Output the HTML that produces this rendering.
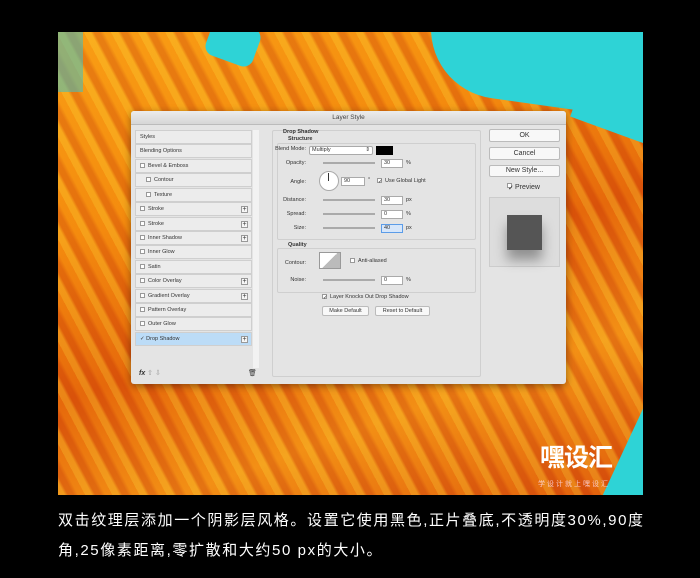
<!DOCTYPE html>
<html><head><meta charset="utf-8"><style>
*{margin:0;padding:0;box-sizing:border-box}
body{width:700px;height:578px;background:#000;position:relative;overflow:hidden;font-family:"Liberation Sans",sans-serif}
.paint{position:absolute;left:58px;top:32px;width:585px;height:463px;overflow:hidden;
background:
repeating-linear-gradient(62deg,rgba(255,200,40,.35) 0 6px,rgba(200,50,0,.3) 9px 14px,rgba(255,140,0,.2) 18px 24px),
linear-gradient(160deg,#f7a21a 0%,#f28c12 30%,#e0600e 55%,#f0901a 75%,#d9520e 100%);}
.teal1{position:absolute;left:370px;top:-30px;width:260px;height:105px;background:#2ed3d6;transform:rotate(8deg);border-radius:20px 0 0 70px}
.teal1b{position:absolute;left:520px;top:40px;width:80px;height:60px;background:#2ed3d6;transform:rotate(20deg)}
.teal2{position:absolute;left:0;top:0;width:25px;height:60px;background:#4cbcb6;opacity:.6}
.teal3{position:absolute;left:555px;top:380px;width:80px;height:140px;background:#2ed3d6;transform:rotate(25deg)}
.teal4{position:absolute;left:150px;top:-10px;width:50px;height:40px;background:#2ed3d6;transform:rotate(20deg);border-radius:10px}
.logo{position:absolute;left:540px;top:438px;color:#fff;font:bold 25px "Noto Sans CJK SC",sans-serif;letter-spacing:-1px}
.slogan{position:absolute;left:538px;top:479px;color:#fde;font:7px "Noto Sans CJK SC",sans-serif;letter-spacing:2px;opacity:.8}
.dlg{position:absolute;left:131px;top:111px;width:435px;height:273px;background:#e4e4e4;border-radius:3px;font-size:5.5px;color:#333;box-shadow:0 2px 8px rgba(0,0,0,.4)}
.title{height:14px;background:linear-gradient(#ececec,#d6d6d6);text-align:center;font-size:6.5px;line-height:14px;color:#444;border-bottom:1px solid #bbb;border-radius:3px 3px 0 0}
.a{position:absolute}
.row{position:absolute;left:4px;width:117px;height:14px;background:#ececec;border:1px solid #cfcfcf;line-height:13px;padding-left:4px}
.cb{display:inline-block;width:5px;height:5px;border:1px solid #999;background:#fff;margin-right:3px;vertical-align:-1px}
.plus{position:absolute;right:3px;top:3px;width:7px;height:7px;border:1px solid #999;background:#f6f6f6;font-size:7px;line-height:5px;text-align:center}
.box{position:absolute;border:1px solid #cfcfcf;border-radius:2px}
.fld{position:absolute;height:9px;background:#fff;border:1px solid #aaa;padding-left:2px;line-height:7px}
.sl{position:absolute;height:2px;background:#aaa;width:52px}
.lbl{position:absolute;text-align:right;width:40px}
.btn{position:absolute;background:#f8f8f8;border:1px solid #bbb;border-radius:2px;text-align:center}
.cap{position:absolute;left:58px;color:#fff;font:15px "Liberation Sans","Noto Sans CJK SC",sans-serif;white-space:nowrap;letter-spacing:1.6px}
</style></head><body>
<div class="paint"><div class="teal1"></div><div class="teal1b"></div><div class="teal2"></div><div class="teal3"></div><div class="teal4"></div></div>
<div class="logo">嘿设汇</div>
<div class="slogan">学设计就上嘿设汇</div>

<div class="dlg">
<div class="title">Layer Style</div>
<div class="row" style="top:19px">Styles</div>
<div class="row" style="top:33px">Blending Options</div>
<div class="row" style="top:48px"><span class="cb"></span>Bevel &amp; Emboss</div>
<div class="row" style="top:62px;padding-left:10px"><span class="cb"></span>Contour</div>
<div class="row" style="top:77px;padding-left:10px"><span class="cb"></span>Texture</div>
<div class="row" style="top:91px"><span class="cb"></span>Stroke<span class="plus">+</span></div>
<div class="row" style="top:106px"><span class="cb"></span>Stroke<span class="plus">+</span></div>
<div class="row" style="top:120px"><span class="cb"></span>Inner Shadow<span class="plus">+</span></div>
<div class="row" style="top:134px"><span class="cb"></span>Inner Glow</div>
<div class="row" style="top:149px"><span class="cb"></span>Satin</div>
<div class="row" style="top:163px"><span class="cb"></span>Color Overlay<span class="plus">+</span></div>
<div class="row" style="top:178px"><span class="cb"></span>Gradient Overlay<span class="plus">+</span></div>
<div class="row" style="top:192px"><span class="cb"></span>Pattern Overlay</div>
<div class="row" style="top:206px"><span class="cb"></span>Outer Glow</div>
<div class="row" style="top:221px;background:#bcdcf7">✓ Drop Shadow<span class="plus">+</span></div>
<div class="a" style="left:122px;top:19px;width:6px;height:238px;background:#f2f2f2"></div>
<div class="a" style="left:8px;top:258px;font-size:7px;font-style:italic;font-weight:bold">fx <span style="font-style:normal;color:#999;font-weight:normal">⇧ ⇩</span></div>
<div class="a" style="left:117px;top:258px;font-size:7px">🗑</div>

<div class="box" style="left:141px;top:19px;width:209px;height:247px"></div>
<div class="a" style="left:152px;top:18px;font-weight:bold">Drop Shadow</div>
<div class="a" style="left:157px;top:25px;font-weight:bold">Structure</div>
<div class="box" style="left:146px;top:32px;width:199px;height:97px"></div>
<div class="lbl" style="left:120px;top:35px;width:55px">Blend Mode:</div>
<div class="fld" style="left:178px;top:35px;width:64px;border-radius:2px">Multiply<span style="float:right;margin-right:2px">⇕</span></div>
<div class="a" style="left:245px;top:35px;width:17px;height:9px;background:#000"></div>
<div class="lbl" style="left:120px;top:49px;width:55px">Opacity:</div><div class="sl" style="left:192px;top:51px"></div><div class="fld" style="left:250px;top:48px;width:22px">30</div><div class="a" style="left:275px;top:49px">%</div>
<div class="lbl" style="left:120px;top:68px;width:55px">Angle:</div>
<div class="a" style="left:188px;top:60px;width:20px;height:20px;border-radius:50%;background:#fff;border:1px solid #aaa"></div><div class="a" style="left:197px;top:62px;width:1px;height:8px;background:#333"></div>
<div class="fld" style="left:210px;top:66px;width:24px">90</div><div class="a" style="left:237px;top:66px">°</div>
<div class="a" style="left:246px;top:67px"><span class="cb">✓</span>Use Global Light</div>
<div class="lbl" style="left:120px;top:86px;width:55px">Distance:</div><div class="sl" style="left:192px;top:88px"></div><div class="fld" style="left:250px;top:85px;width:22px">30</div><div class="a" style="left:275px;top:86px">px</div>
<div class="lbl" style="left:120px;top:100px;width:55px">Spread:</div><div class="sl" style="left:192px;top:102px"></div><div class="fld" style="left:250px;top:99px;width:22px">0</div><div class="a" style="left:275px;top:100px">%</div>
<div class="lbl" style="left:120px;top:114px;width:55px">Size:</div><div class="sl" style="left:192px;top:116px"></div><div class="fld" style="left:250px;top:113px;width:22px;border-color:#5b9ce8;background:#d6e6fa">40</div><div class="a" style="left:275px;top:114px">px</div>
<div class="a" style="left:157px;top:131px;font-weight:bold">Quality</div>
<div class="box" style="left:146px;top:137px;width:199px;height:45px"></div>
<div class="lbl" style="left:120px;top:149px;width:55px">Contour:</div>
<div class="a" style="left:188px;top:141px;width:22px;height:17px;background:linear-gradient(135deg,#fff 50%,#bbb 50%);border:1px solid #999"></div>
<div class="a" style="left:219px;top:147px"><span class="cb"></span>Anti-aliased</div>
<div class="lbl" style="left:120px;top:166px;width:55px">Noise:</div><div class="sl" style="left:192px;top:168px"></div><div class="fld" style="left:250px;top:165px;width:22px">0</div><div class="a" style="left:275px;top:166px">%</div>
<div class="a" style="left:191px;top:183px"><span class="cb">✓</span>Layer Knocks Out Drop Shadow</div>
<div class="btn" style="left:191px;top:195px;width:47px;height:10px;line-height:8px">Make Default</div>
<div class="btn" style="left:244px;top:195px;width:55px;height:10px;line-height:8px">Reset to Default</div>

<div class="btn" style="left:358px;top:18px;width:71px;height:13px;font-size:7px;line-height:11px">OK</div>
<div class="btn" style="left:358px;top:36px;width:71px;height:13px;font-size:7px;line-height:11px">Cancel</div>
<div class="btn" style="left:358px;top:54px;width:71px;height:12px;font-size:7px;line-height:10px">New Style...</div>
<div class="a" style="left:376px;top:72px;font-size:7px"><span class="cb">✓</span>Preview</div>
<div class="a" style="left:358px;top:86px;width:71px;height:70px;background:#ddd;border:1px solid #ccc"></div>
<div class="a" style="left:376px;top:104px;width:35px;height:35px;background:#555;box-shadow:0 10px 12px rgba(0,0,0,.35)"></div>
</div>

<div class="cap" style="top:509px">双击纹理层添加一个阴影层风格。设置它使用黑色,正片叠底,不透明度30%,90度</div>
<div class="cap" style="top:539px">角,25像素距离,零扩散和大约50 px的大小。</div>
</body></html>
